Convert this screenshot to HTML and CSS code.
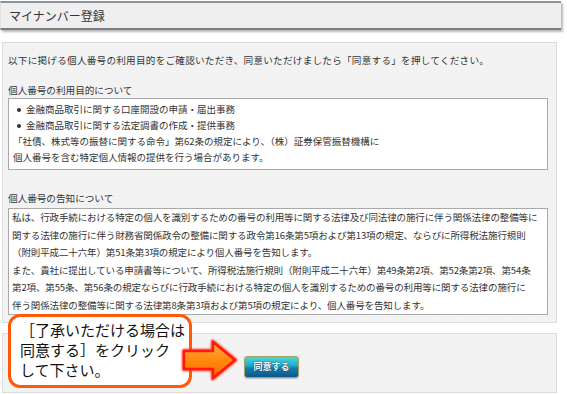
FILE: index.html
```html
<!DOCTYPE html>
<html lang="ja">
<head>
<meta charset="utf-8">
<title>マイナンバー登録</title>
<link rel="stylesheet" href="styles.css">
</head>
<body>
<div class="page">
  <div class="titlebar">マイナンバー登録</div>

  <div class="panel main">
    <p class="intro">以下に掲げる個人番号の利用目的をご確認いただき、同意いただけましたら「同意する」を押してください。</p>

    <h2 class="label first">個人番号の利用目的について</h2>
    <div class="box box-purpose">
      <ul class="list">
        <li>金融商品取引に関する口座開設の申請・届出事務</li>
        <li>金融商品取引に関する法定調書の作成・提供事務</li>
      </ul>
      <p>「社債、株式等の振替に関する命令」第62条の規定により、（株）証券保管振替機構に<br>個人番号を含む特定個人情報の提供を行う場合があります。</p>
    </div>

    <h2 class="label second">個人番号の告知について</h2>
    <div class="box box-notice">
      <p>私は、行政手続における特定の個人を識別するための番号の利用等に関する法律及び同法律の施行に伴う関係法律の整備等に<br>関する法律の施行に伴う財務省関係政令の整備に関する政令第16条第5項および第13項の規定、ならびに所得税法施行規則<br>（附則平成二十六年）第51条第3項の規定により個人番号を告知します。</p>
      <p>また、貴社に提出している申請書等について、所得税法施行規則（附則平成二十六年）第49条第2項、第52条第2項、第54条<br>第2項、第55条、第56条の規定ならびに行政手続における特定の個人を識別するための番号の利用等に関する法律の施行に<br>伴う関係法律の整備等に関する法律第8条第3項および第5項の規定により、個人番号を告知します。</p>
    </div>
  </div>

  <div class="panel actions">
    <button class="agree" type="button">同意する</button>
  </div>

  <div class="callout">［了承いただける場合は<br>同意する］をクリック<br>して下さい。</div>
  <svg class="arrow" width="60" height="46" viewBox="0 0 60 46" aria-hidden="true">
    <defs>
      <linearGradient id="ag" x1="0" y1="0" x2="0" y2="1">
        <stop offset="0" stop-color="#ffb040"/>
        <stop offset="0.5" stop-color="#ff8a10"/>
        <stop offset="1" stop-color="#ff6a00"/>
      </linearGradient>
      <filter id="glow" x="-20%" y="-20%" width="140%" height="140%">
        <feGaussianBlur stdDeviation="1.2"/>
      </filter>
    </defs>
    <path d="M4 14 H33 V5 L55 23 L33 41 V32 H4 Z" fill="none" stroke="#ff2a1a" stroke-width="4" stroke-linejoin="round" filter="url(#glow)"/>
    <path d="M4 14 H33 V5 L55 23 L33 41 V32 H4 Z" fill="url(#ag)" stroke="#ff1a0a" stroke-width="2.5" stroke-linejoin="miter"/>
  </svg>
</div>
</body>
</html>
```

FILE: styles.css
```css
* {
  box-sizing: border-box;
}

html, body {
  margin: 0;
  padding: 0;
  background: #ffffff;
}

body {
  font-family: "Noto Sans CJK JP", "Noto Sans", sans-serif;
  color: #333333;
}

.page {
  position: relative;
  width: 567px;
  height: 394px;
  padding-top: 1px;
  overflow: hidden;
}

.titlebar {
  margin-right: 6px;
  height: 29px;
  background: #efefef;
  border-top: 2px solid #8d939c;
  border-bottom: 2px solid #7d7d7d;
  border-left: 1px solid #e2e2e2;
  box-shadow: 2px 2px 2px rgba(0, 0, 0, 0.28);
  padding-left: 8px;
  font-size: 12px;
  line-height: 25px;
  color: #333333;
}

.panel {
  margin: 12px 10px 0 2px;
  border: 1px solid #dcdcdc;
  background-color: #f3f3f3;
  background-image:
    linear-gradient(45deg, rgba(0,0,0,0.012) 25%, transparent 25%, transparent 75%, rgba(0,0,0,0.012) 75%);
  background-size: 3px 3px;
}

.main {
  height: 281px;
  padding: 9px 6px 0 5px;
}

.intro {
  margin: 0;
  font-size: 9.6px;
  line-height: 16px;
  letter-spacing: 0.25px;
}

.label {
  margin: 0;
  font-weight: normal;
  font-size: 9.6px;
  line-height: 14px;
}

.label.first {
  margin-top: 15px;
}

.label.second {
  margin-top: 21px;
}

.box {
  margin-right: 2px;
  background: #ffffff;
  border: 1px solid #a9a9a9;
  font-size: 9.5px;
  color: #333333;
}

.box p {
  margin: 0;
  white-space: nowrap;
}

.box-purpose {
  margin-top: 1px;
  height: 72px;
  padding: 2px 4px 0 4px;
  line-height: 16px;
}

.list {
  margin: 0;
  padding: 0;
  list-style: none;
}

.list li {
  position: relative;
  padding-left: 13px;
}

.list li::before {
  content: "";
  position: absolute;
  left: 4px;
  top: 7px;
  width: 4px;
  height: 4px;
  border-radius: 50%;
  background: #333333;
}

.box-notice {
  margin-top: 3px;
  height: 107px;
  padding: 0 3px 0 3px;
  line-height: 17.6px;
  letter-spacing: -0.12px;
}

.actions {
  margin-top: 10px;
  height: 60px;
  padding: 17px 0 0 241px;
}

.agree {
  width: 55px;
  height: 22px;
  padding: 0;
  border: 1px solid #a8a060;
  border-radius: 3px;
  background: linear-gradient(#4ad6da 0%, #22a8c4 45%, #137fae 55%, #0b5688 100%);
  color: #ffffff;
  font-family: "Noto Sans CJK JP", sans-serif;
  font-weight: bold;
  font-size: 9px;
  line-height: 20px;
  text-shadow: 0 0 1px #083a5a, 0 0 1px #083a5a;
  box-shadow: 0 1px 1px rgba(0, 0, 0, 0.2);
}

.callout {
  position: absolute;
  left: 8px;
  top: 314px;
  width: 184px;
  height: 74px;
  padding: 3px 0 0 9px;
  background: #ffffff;
  border: 3px solid #ff5a0a;
  border-radius: 12px;
  color: #111111;
  font-size: 15px;
  line-height: 20px;
  white-space: nowrap;
}

.arrow {
  position: absolute;
  left: 180px;
  top: 337px;
}
```
